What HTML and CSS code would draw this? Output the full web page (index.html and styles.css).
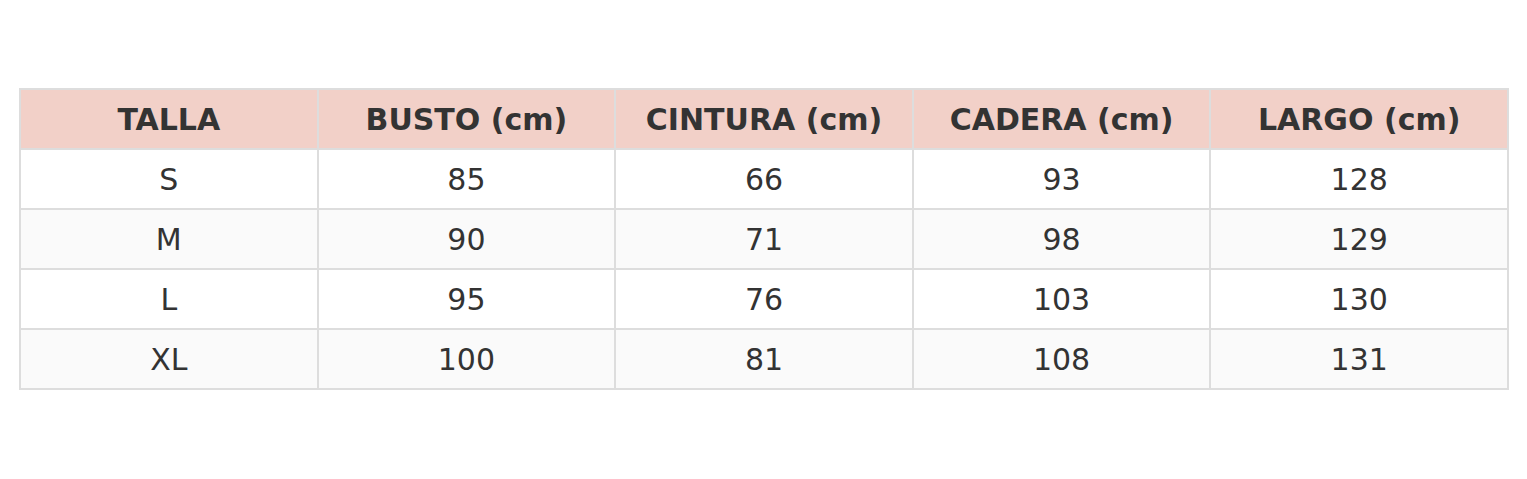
FILE: index.html
```html
<!DOCTYPE html>
<html lang="es">
<head>
<meta charset="utf-8">
<title>Tabla de tallas</title>
<link rel="stylesheet" href="styles.css">
</head>
<body>
<main class="wrap">
<table class="sizes">
<thead>
<tr><th>TALLA</th><th>BUSTO (cm)</th><th>CINTURA (cm)</th><th>CADERA (cm)</th><th>LARGO (cm)</th></tr>
</thead>
<tbody>
<tr><td>S</td><td>85</td><td>66</td><td>93</td><td>128</td></tr>
<tr><td>M</td><td>90</td><td>71</td><td>98</td><td>129</td></tr>
<tr><td>L</td><td>95</td><td>76</td><td>103</td><td>130</td></tr>
<tr><td>XL</td><td>100</td><td>81</td><td>108</td><td>131</td></tr>
</tbody>
</table>
</main>
</body>
</html>
```
FILE: styles.css
```css
html, body { margin: 0; padding: 0; background: #fff; }
body { font-family: "DejaVu Sans", sans-serif; color: #333; }
.wrap {
  min-height: 477px;
  box-sizing: border-box;
  padding: 0 18px 0 19px;
  display: flex;
  align-items: center;
}
.sizes {
  width: 100%;
  border-collapse: collapse;
  table-layout: fixed;
  border: 2px solid #ddd;
  font-size: 30px;
}
.sizes th, .sizes td {
  border: 2px solid #ddd;
  height: 56px;
  padding: 2px 0 0;
  text-align: center;
  vertical-align: middle;
}
.sizes th { background: #f2d0c8; font-weight: bold; }
.sizes tbody tr:nth-child(even) td { background: #fafafa; }
```
